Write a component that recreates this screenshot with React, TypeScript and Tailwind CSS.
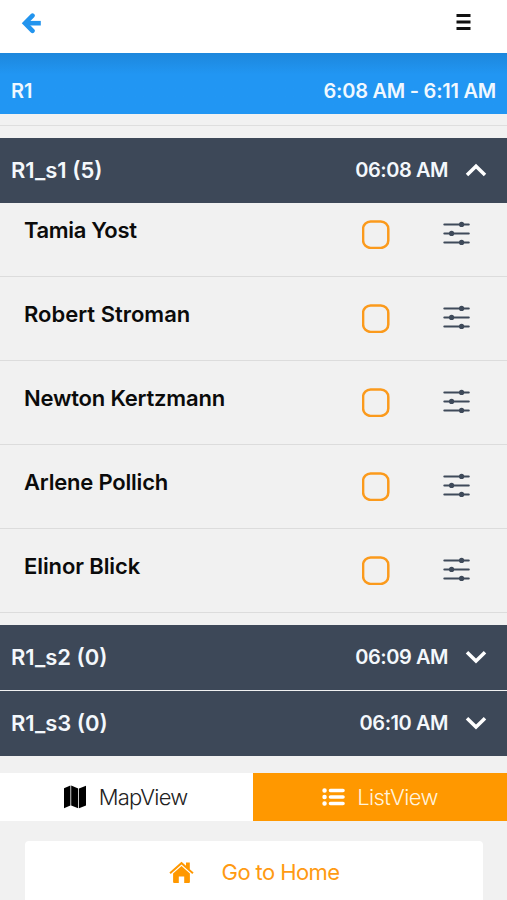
import React from "react";

const riders = [
  { name: "Tamia Yost", tracking: "tracking-[-0.35px]" },
  { name: "Robert Stroman", tracking: "tracking-normal" },
  { name: "Newton Kertzmann", tracking: "tracking-[-0.2px]" },
  { name: "Arlene Pollich", tracking: "tracking-[-0.2px]" },
  { name: "Elinor Blick", tracking: "tracking-[-0.1px]" },
];

function Chevron({ up = false }: { up?: boolean }) {
  return (
    <svg width="22" height="14" viewBox="0 0 22 14" fill="none" stroke="white" strokeWidth="3.5" className="ml-[17px] shrink-0">
      <path d={up ? "M2 12 11 3.2 20 12" : "M2 2.2 11 11 20 2.2"} />
    </svg>
  );
}

function Stop({ name, time, open = false }: { name: string; time: string; open?: boolean }) {
  return (
    <div className="flex h-[65px] items-center bg-[#3d4858] pr-5 pb-0.5 pl-[11px] font-semibold text-[#f4f8fc]">
      <span className="flex-1 text-[22px]">{name}</span>
      <span className="text-[20px] tracking-[-0.45px]">{time}</span>
      <Chevron up={open} />
    </div>
  );
}

function Checkbox() {
  return (
    <svg width="28" height="29" viewBox="0 0 28 29" fill="none" stroke="#fb9a1c" strokeWidth="2.5" className="mr-[53px]">
      <rect x="1.1" y="1.5" width="25.2" height="26.4" rx="7.5" />
    </svg>
  );
}

function Sliders() {
  return (
    <svg width="28" height="29" viewBox="0 0 28 29" stroke="#3f4a5a" strokeWidth="2" strokeLinecap="round" fill="#3f4a5a">
      <path d="M1.3 4.4h24.5M1.3 13.4h24.5M1.3 22.4h24.5" />
      <circle cx="18.6" cy="4.4" r="1.6" />
      <circle cx="8.6" cy="13.4" r="1.6" />
      <circle cx="18.6" cy="22.4" r="1.6" />
    </svg>
  );
}

function MapIcon() {
  return (
    <svg width="24" height="24" viewBox="0 0 24 24" fill="#000">
      <path d="M1 3.2 7.4.6V20.4L1 23.2Z" />
      <path d="M8.2.6 15.2 3.4V23.2L8.2 20.6Z" />
      <path d="M16 3.4 23 .8V20.4L16 23.2Z" />
    </svg>
  );
}

function HomeIcon() {
  return (
    <svg width="25" height="23" viewBox="0 0 25 23" fill="#ff9800">
      <path d="M12.5 .8 17 4.8V1.4h3.8v6.8L24.6 11.6 23.3 13.1 12.5 3.5 1.7 13.1 .4 11.6Z" />
      <path d="M12.5 5.1 20.9 12.5V21q0 1-1 1H15.2V15.6H9.8V22H5.1q-1 0-1-1V12.5Z" />
    </svg>
  );
}

export default function App() {
  return (
    <div className="flex h-[900px] w-[507px] flex-col overflow-hidden bg-[#f1f1f1] font-['Inter',sans-serif] leading-none">
      <header className="flex h-[53px] shrink-0 items-center justify-between bg-white pr-9 pb-[9px] pl-[21px]">
        <svg width="21" height="22" viewBox="0 0 21 22" fill="none" stroke="#2294ee" strokeWidth="4.6" className="mt-0.5">
          <path d="M11.5 3.6 4 11.2 11.5 18.8" strokeLinecap="round" />
          <path d="M5 11.2h14.8" />
        </svg>
        <svg width="15" height="18" viewBox="0 0 15 18" stroke="#111" strokeWidth="3">
          <path d="M.5 2.5h14M.5 9h14M.5 15.5h14" />
        </svg>
      </header>
      <div className="flex h-[61px] shrink-0 items-center justify-between bg-linear-to-b from-[#1d87dc] to-[#2196f3] to-35% pt-[14px] pr-[11px] pl-[11px] text-[20px] font-semibold text-[#f0f8ff]">
        <span>R1</span>
        <span className="tracking-[-0.25px]">6:08 AM - 6:11 AM</span>
      </div>
      <div className="h-3 shrink-0 border-b border-[#dedede]" />
      <main className="mt-3 shrink-0">
        <Stop name="R1_s1 (5)" time="06:08 AM" open />
        <div>
          {riders.map(({ name, tracking }) => (
            <div key={name} className="flex h-[84px] items-center border-b border-[#dcdcdc] pr-9 pl-6 first:h-[74px] first:pb-2.5">
              <span className={`flex-1 pb-[9px] text-[22px] font-semibold text-[#0b0b0b] ${tracking}`}>{name}</span>
              <Checkbox />
              <Sliders />
            </div>
          ))}
        </div>
        <div className="mt-3 flex flex-col gap-px">
          <Stop name="R1_s2 (0)" time="06:09 AM" />
          <Stop name="R1_s3 (0)" time="06:10 AM" />
        </div>
      </main>
      <nav className="mt-[17px] grid h-12 shrink-0 grid-cols-[253px_1fr] text-[22px] font-light">
        <div className="flex items-center justify-center bg-white pr-[3px] text-[#222]">
          <MapIcon />
          <span className="ml-3 tracking-[-0.8px]">MapView</span>
        </div>
        <div className="flex items-center justify-center bg-[#ff9800] text-[#fff3dc]">
          <svg width="23" height="20" viewBox="0 0 23 20" stroke="white" strokeWidth="3.6" strokeLinecap="round">
            <path d="M8.5 3.5h12.5M8.5 10h12.5M8.5 16.5h12.5" />
            <path d="M2.5 3.5h.1M2.5 10h.1M2.5 16.5h.1" strokeWidth="4.4" />
          </svg>
          <span className="ml-3 tracking-[-0.6px]">ListView</span>
        </div>
      </nav>
      <div className="mx-[25px] mt-5 flex h-[62px] w-[458px] shrink-0 items-center justify-center rounded-[4px] bg-white text-[22px] text-[#ff9a12]">
        <HomeIcon />
        <span className="ml-7 tracking-[-0.6px]">Go to Home</span>
      </div>
    </div>
  );
}
